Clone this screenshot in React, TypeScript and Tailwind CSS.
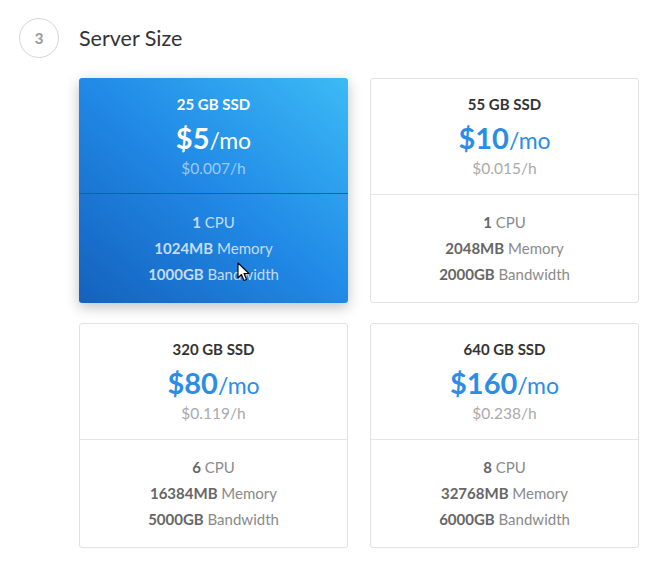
import React from 'react';

type Plan = {
  ssd: string;
  price: string;
  hourly: string;
  cpu: string;
  memory: string;
  bandwidth: string;
};

const plans: Plan[] = [
  { ssd: '25 GB SSD', price: '$5', hourly: '$0.007/h', cpu: '1', memory: '1024MB', bandwidth: '1000GB' },
  { ssd: '55 GB SSD', price: '$10', hourly: '$0.015/h', cpu: '1', memory: '2048MB', bandwidth: '2000GB' },
  { ssd: '320 GB SSD', price: '$80', hourly: '$0.119/h', cpu: '6', memory: '16384MB', bandwidth: '5000GB' },
  { ssd: '640 GB SSD', price: '$160', hourly: '$0.238/h', cpu: '8', memory: '32768MB', bandwidth: '6000GB' },
];

function Cursor() {
  return (
    <svg className="absolute left-[158px] top-[184px]" width="14" height="20" viewBox="0 0 14 20">
      <path d="M1 1 L1 16 L4.5 12.5 L7 18.5 L9.5 17.5 L7 11.5 L12 11.5 Z" fill="#fff" stroke="#000" strokeWidth="1.1" strokeLinejoin="round" />
    </svg>
  );
}

function PlanCard({ plan, selected }: { plan: Plan; selected?: boolean }) {
  if (selected) {
    return (
      <div className="relative h-[225px] rounded-[3px] bg-gradient-to-tr from-[#1462bd] via-[#2189e6] to-[#3dbaf5] shadow-[0_4px_14px_rgba(0,0,0,0.25)] text-center">
        <div className="h-[116px] border-b border-[#1a5aa6] pt-[17px]">
          <div className="text-[15px] font-bold leading-[18px] text-white">{plan.ssd}</div>
          <div className="mt-[9px] leading-[32px] text-white">
            <span className="text-[29px] font-bold">{plan.price}</span>
            <span className="text-[23px]">/mo</span>
          </div>
          <div className="text-[15.5px] leading-[18px] text-[#9ccaf3]">{plan.hourly}</div>
        </div>
        <div className="flex flex-col gap-[8px] pt-[19px] text-[15px] leading-[18px] text-[#c4dcf5]">
          <div><span className="font-bold">{plan.cpu}</span> CPU</div>
          <div><span className="font-bold">{plan.memory}</span> Memory</div>
          <div><span className="font-bold">{plan.bandwidth}</span> Bandwidth</div>
        </div>
        <Cursor />
      </div>
    );
  }
  return (
    <div className="h-[225px] rounded-[3px] border border-[#e2e2e2] bg-white text-center">
      <div className="h-[116px] border-b border-[#e6e6e6] pt-[16px]">
        <div className="text-[15px] font-bold leading-[18px] text-[#333]">{plan.ssd}</div>
        <div className="mt-[9px] leading-[32px] text-[#2b8de6]">
          <span className="text-[29px] font-bold">{plan.price}</span>
          <span className="text-[23px]">/mo</span>
        </div>
        <div className="text-[15.5px] leading-[18px] text-[#aaaaaa]">{plan.hourly}</div>
      </div>
      <div className="flex flex-col gap-[8px] pt-[18px] text-[15px] leading-[18px] text-[#8a8a8a]">
        <div><span className="font-bold text-[#666]">{plan.cpu}</span> CPU</div>
        <div><span className="font-bold text-[#666]">{plan.memory}</span> Memory</div>
        <div><span className="font-bold text-[#666]">{plan.bandwidth}</span> Bandwidth</div>
      </div>
    </div>
  );
}

export default function App() {
  return (
    <div className="min-h-[574px] w-[654px] bg-white pl-[19px] pt-[18px] font-['Lato',sans-serif]">
      <div className="flex items-center gap-[20px]">
        <div className="flex h-[40px] w-[40px] items-center justify-center rounded-full border border-[#d6d6d6] text-[15px] font-bold text-[#999]">
          3
        </div>
        <div className="text-[21.5px] leading-[28px] text-[#333]">Server Size</div>
      </div>
      <div className="ml-[60px] mt-[20px] grid w-[560px] grid-cols-2 gap-x-[22px] gap-y-[20px]">
        {plans.map((p, i) => (
          <PlanCard key={p.ssd} plan={p} selected={i === 0} />
        ))}
      </div>
    </div>
  );
}
